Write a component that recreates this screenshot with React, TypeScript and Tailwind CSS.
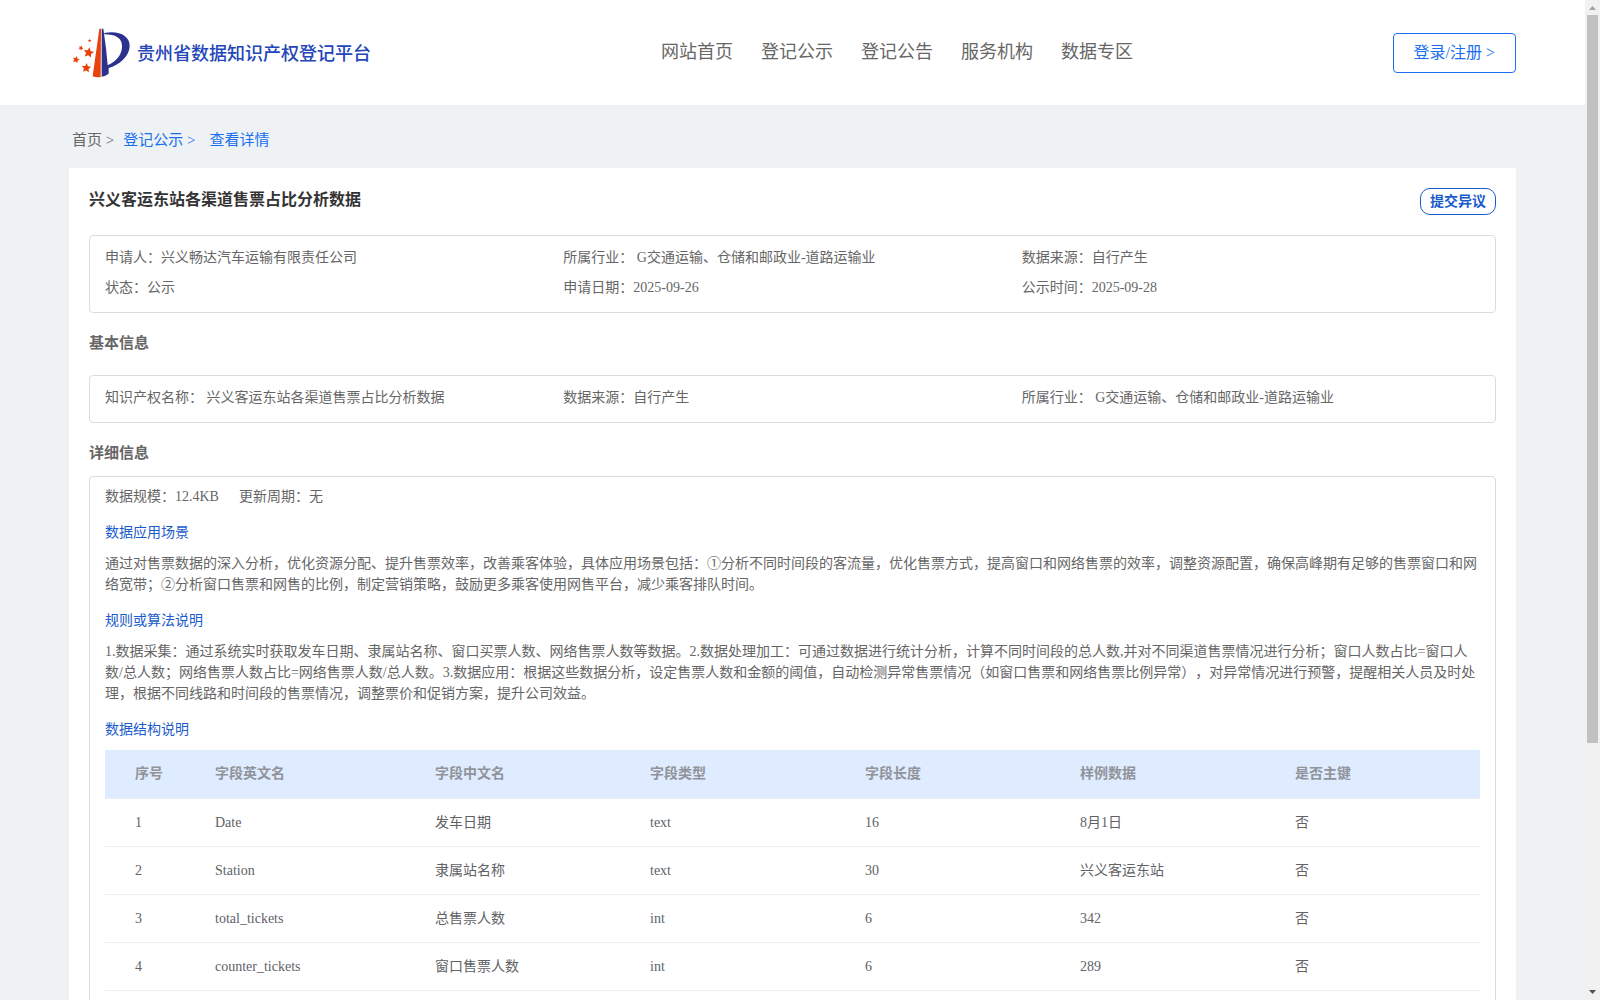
import type { ReactNode } from 'react';

const navItems = ['网站首页', '登记公示', '登记公告', '服务机构', '数据专区'];

const summary = [
  { label: '申请人：', value: '兴义畅达汽车运输有限责任公司' },
  { label: '所属行业：', value: ' G交通运输、仓储和邮政业-道路运输业' },
  { label: '数据来源：', value: '自行产生' },
  { label: '状态：', value: '公示' },
  { label: '申请日期：', value: '2025-09-26' },
  { label: '公示时间：', value: '2025-09-28' },
];

const basicInfo = [
  { label: '知识产权名称：', value: ' 兴义客运东站各渠道售票占比分析数据' },
  { label: '数据来源：', value: '自行产生' },
  { label: '所属行业：', value: ' G交通运输、仓储和邮政业-道路运输业' },
];

const columns = ['序号', '字段英文名', '字段中文名', '字段类型', '字段长度', '样例数据', '是否主键'];

const rows = [
  ['1', 'Date', '发车日期', 'text', '16', '8月1日', '否'],
  ['2', 'Station', '隶属站名称', 'text', '30', '兴义客运东站', '否'],
  ['3', 'total_tickets', '总售票人数', 'int', '6', '342', '否'],
  ['4', 'counter_tickets', '窗口售票人数', 'int', '6', '289', '否'],
];

const STAR = '0,-10 2.8,-3.8 9.5,-3.1 4.6,1.5 5.9,8.1 0,4.9 -5.9,8.1 -4.6,1.5 -9.5,-3.1 -2.8,-3.8';

const Logo = () => (
  <svg viewBox="12 9 177 153" className="h-[51px] w-[59px]" aria-hidden="true">
    <path d="M94 14 L99 14 L98 159 Q86 161 74 157 Z" fill="#e8430f" />
    <path d="M101 14 L106 14 L114 72 L119 124 C144 112 161 94 162 68 C163 42 142 31 109 31 L109 27 C150 18 186 34 185 66 C184 98 154 123 122 132 L122 149 Q112 157 101 158 Z" fill="#2b318c" />
    <g fill="#e8430f">
      <polygon points={STAR} transform="translate(62 86) rotate(10) scale(1.65)" />
      <polygon points={STAR} transform="translate(55 132) rotate(5) scale(1.5)" />
      <polygon points={STAR} transform="translate(24 107) rotate(15) scale(1.1)" />
      <polygon points={STAR} transform="translate(39 72) rotate(25) scale(0.8)" />
      <polygon points={STAR} transform="translate(65 50) scale(0.55)" />
    </g>
  </svg>
);

const InfoBox = ({ items }: { items: { label: string; value: string }[] }) => (
  <dl className="grid grid-cols-3 rounded-sm border border-[#dcdcdc] px-[15px] pt-[7px] pb-[9px] leading-[30px]">
    {items.map((item) => (
      <div key={item.label} className="flex whitespace-pre">
        <dt>{item.label}</dt>
        <dd>{item.value}</dd>
      </div>
    ))}
  </dl>
);

const SubTitle = ({ children }: { children: ReactNode }) => (
  <h3 className="pt-[15px] pb-[10px] leading-[21px] text-[#1a5bcc]">{children}</h3>
);

const Scrollbar = () => (
  <div className="flex w-[15px] shrink-0 flex-col items-center bg-[#f1f1f1]" aria-hidden="true">
    <svg viewBox="0 0 15 15" className="size-[15px] shrink-0">
      <path d="M4 10 L7.5 6 L11 10 Z" fill="#a3a3a3" />
    </svg>
    <div className="flex w-full flex-1 flex-col px-[2px]">
      <div className="h-3/4 w-full bg-[#c1c1c1]" />
    </div>
    <svg viewBox="0 0 15 15" className="size-[15px] shrink-0">
      <path d="M4 5 L7.5 9 L11 5 Z" fill="#505050" />
    </svg>
  </div>
);

const Header = () => (
  <header className="flex h-[105px] items-center justify-between bg-white px-[69px]">
    <div className="flex flex-[17]">
      <a href="#" className="flex items-center gap-[6px] pl-[3px]">
        <Logo />
        <span className="pt-1 text-[18px] font-medium text-[#2346b8]">贵州省数据知识产权登记平台</span>
      </a>
    </div>
    <nav className="flex gap-7 text-[18px]">
      {navItems.map((item) => (
        <a key={item} href="#">{item}</a>
      ))}
    </nav>
    <div className="flex flex-[11] justify-end">
      <button type="button" className="h-10 rounded border border-[#1a6ff0] px-5 text-base text-[#1a6ff0]">
        登录/注册 &gt;
      </button>
    </div>
  </header>
);

const App = () => {
  return (
    <div className="flex h-screen overflow-hidden bg-[#eef2f5] font-['Liberation_Serif','Noto_Sans_CJK_SC',serif] text-sm text-[#666] [text-spacing-trim:space-all]">
      <div className="min-w-0 flex-1 overflow-hidden">
        <Header />
        <main className="px-[69px]">
          <div className="flex h-[63px] items-center pt-2 pl-[3px] text-[15px] text-[#1a6ff0]">
            <a href="#" className="mr-[9px] text-[#666]">首页 &gt;</a>
            <a href="#" className="mr-[14px]">登记公示 &gt;</a>
            <a href="#">查看详情</a>
          </div>

          <div className="bg-white px-5 pt-5">
            <div className="flex h-[47px] items-start justify-between">
              <h1 className="text-base leading-6 font-bold text-[#333]">兴义客运东站各渠道售票占比分析数据</h1>
              <button type="button" className="h-[27px] rounded-[10px] border border-[#1a5bcc] px-[9px] leading-6 font-bold text-[#1a5bcc]">
                提交异议
              </button>
            </div>
            <InfoBox items={summary} />

            <h2 className="pt-[18px] pb-5 text-[15px] leading-6 font-bold">基本信息</h2>
            <InfoBox items={basicInfo} />

            <h2 className="pt-[18px] pb-[11px] text-[15px] leading-6 font-bold">详细信息</h2>
            <section className="rounded-sm border border-[#dcdcdc] px-[15px] pt-[9px] pb-5 leading-[21px]">
              <p className="flex gap-5">
                <span>数据规模：12.4KB</span>
                <span>更新周期：无</span>
              </p>
              <SubTitle>数据应用场景</SubTitle>
              <p>
                通过对售票数据的深入分析，优化资源分配、提升售票效率，改善乘客体验，具体应用场景包括：①分析不同时间段的客流量，优化售票方式，提高窗口和网络售票的效率，调整资源配置，确保高峰期有足够的售票窗口和网络宽带；②分析窗口售票和网售的比例，制定营销策略，鼓励更多乘客使用网售平台，减少乘客排队时间。
              </p>
              <SubTitle>规则或算法说明</SubTitle>
              <p>
                1.数据采集：通过系统实时获取发车日期、隶属站名称、窗口买票人数、网络售票人数等数据。2.数据处理加工：可通过数据进行统计分析，计算不同时间段的总人数,并对不同渠道售票情况进行分析；窗口人数占比=窗口人数/总人数；网络售票人数占比=网络售票人数/总人数。3.数据应用：根据这些数据分析，设定售票人数和金额的阈值，自动检测异常售票情况（如窗口售票和网络售票比例异常），对异常情况进行预警，提醒相关人员及时处理，根据不同线路和时间段的售票情况，调整票价和促销方案，提升公司效益。
              </p>
              <SubTitle>数据结构说明</SubTitle>
              <table className="w-full table-fixed text-left text-[#606266]">
                <colgroup>
                  <col className="w-[100px]" />
                  <col className="w-[220px]" />
                  <col className="w-[215px]" />
                  <col className="w-[215px]" />
                  <col className="w-[215px]" />
                  <col className="w-[215px]" />
                  <col />
                </colgroup>
                <thead>
                  <tr className="h-12 border-b border-[#ebeef5] bg-[#dfecff] text-[#909399]">
                    {columns.map((col) => (
                      <th key={col} className="px-[10px] font-bold first:pl-[30px]">{col}</th>
                    ))}
                  </tr>
                </thead>
                <tbody>
                  {rows.map((row) => (
                    <tr key={row[0]} className="h-12 border-b border-[#ebeef5]">
                      {row.map((cell, idx) => (
                        <td key={idx} className="px-[10px] first:pl-[30px]">{cell}</td>
                      ))}
                    </tr>
                  ))}
                </tbody>
              </table>
            </section>
          </div>
        </main>
      </div>
      <Scrollbar />
    </div>
  );
};

export default App;
